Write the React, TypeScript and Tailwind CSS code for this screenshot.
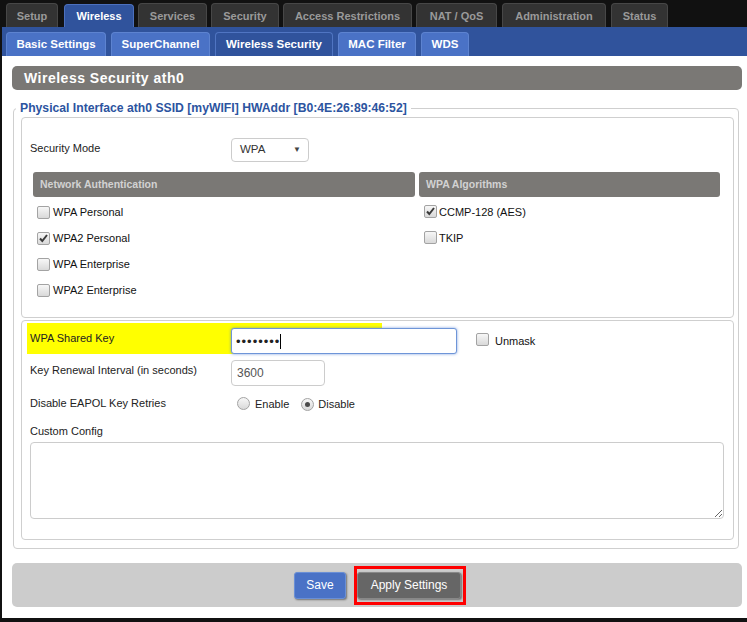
import React from "react";

function CheckBox({ checked = false }: { checked?: boolean }) {
  return (
    <span className="relative inline-block w-[13px] h-[13px] shrink-0 rounded-[2px] border border-[#a3a3a3] bg-gradient-to-b from-[#f7f7f7] to-[#d9d9d9]">
      {checked && (
        <svg viewBox="0 0 13 13" className="absolute left-[-1px] top-[-1px] w-[13px] h-[13px]">
          <path d="M3 6.5 L5.3 9 L10 3" fill="none" stroke="#3a3a3a" strokeWidth="2" />
        </svg>
      )}
    </span>
  );
}

function Radio({ checked = false }: { checked?: boolean }) {
  return (
    <span className="relative inline-flex items-center justify-center w-[13px] h-[13px] shrink-0 rounded-full border border-[#a3a3a3] bg-gradient-to-b from-[#f7f7f7] to-[#d9d9d9]">
      {checked && <span className="w-[5px] h-[5px] rounded-full bg-[#4a4a4a]" />}
    </span>
  );
}

const topTabs = [
  { label: "Setup", cls: "ml-[6px] w-[52px]" },
  { label: "Wireless", cls: "ml-[6px] w-[70px]", active: true },
  { label: "Services", cls: "ml-[4px] w-[69px]" },
  { label: "Security", cls: "ml-[4px] w-[68px]" },
  { label: "Access Restrictions", cls: "ml-[4px] w-[129px]" },
  { label: "NAT / QoS", cls: "ml-[4px] w-[81px]" },
  { label: "Administration", cls: "ml-[5px] w-[104px]" },
  { label: "Status", cls: "ml-[5px] w-[57px]" },
];

const subTabs = [
  { label: "Basic Settings", cls: "ml-[4px] w-[100px]" },
  { label: "SuperChannel", cls: "ml-[5px] w-[99px]" },
  { label: "Wireless Security", cls: "ml-[5px] w-[118px]", active: true },
  { label: "MAC Filter", cls: "ml-[5px] w-[78px]" },
  { label: "WDS", cls: "ml-[5px] w-[48px]" },
];

export default function App() {
  return (
    <div className="w-[747px] h-[622px] bg-[#111] overflow-hidden font-['Liberation_Sans',Arial,sans-serif] text-[11px] text-[#222]">
      {/* top tabs */}
      <div className="h-[27px] flex items-end">
        {topTabs.map((t) =>
          t.active ? (
            <div
              key={t.label}
              className={`${t.cls} h-[23px] pt-[1px] rounded-t-[4px] border border-b-0 border-[#4c70bd] bg-[#30539c] text-white font-bold text-[11px] flex items-center justify-center`}
            >
              {t.label}
            </div>
          ) : (
            <div
              key={t.label}
              className={`${t.cls} h-[24px] pt-[1px] rounded-t-[4px] border border-b-0 border-[#474747] bg-[#333333] text-[#9a9a9a] font-bold text-[11px] flex items-center justify-center`}
            >
              {t.label}
            </div>
          )
        )}
      </div>
      {/* sub tabs */}
      <div className="h-[29px] ml-[2px] bg-[#30539c] flex items-end">
        {subTabs.map((t) =>
          t.active ? (
            <div
              key={t.label}
              className={`${t.cls} h-[24px] rounded-t-[4px] border border-b-0 border-[#5075c2] bg-[#30539c] text-white font-bold text-[11.5px] flex items-center justify-center`}
            >
              {t.label}
            </div>
          ) : (
            <div
              key={t.label}
              className={`${t.cls} h-[24px] rounded-t-[4px] border border-b-0 border-[#5d83d0] bg-[#4a72c6] text-white font-bold text-[11.5px] flex items-center justify-center`}
            >
              {t.label}
            </div>
          )
        )}
      </div>

      {/* content */}
      <div className="ml-[2px] h-[562px] bg-white pt-[10px] pl-[10px] pr-[5px]">
        <div className="h-[24px] rounded-[5px] bg-[#7a7875] text-white font-bold text-[14px] tracking-[0.5px] pl-[12px] flex items-center">
          Wireless Security ath0
        </div>

        <fieldset className="mt-[12px] ml-[1px] mr-[3px] border border-[#cfcfcf] rounded-[4px] pl-[7px] pr-[4px] pb-[8px]">
          <legend className="ml-[-5px] px-[4px] text-[12.2px] leading-[13px] font-bold text-[#2c54a0]">
            Physical Interface ath0 SSID [myWIFI] HWAddr [B0:4E:26:89:46:52]
          </legend>

          {/* box 1 */}
          <div className="mt-[2px] h-[201px] border border-[#cfcfcf] rounded-[4px] pl-[8px] pt-[20px]">
            <div className="flex items-start h-[24px]">
              <div className="w-[201px] leading-[20px]">Security Mode</div>
              <div className="w-[78px] h-[24px] border border-[#cccccc] rounded-[4px] flex items-center justify-between pl-[8px] pr-[7px] text-[11.5px] text-[#333]">
                <span>WPA</span>
                <span className="text-[8px] text-[#444]">▼</span>
              </div>
            </div>

            <div className="mt-[10px] ml-[3px] flex gap-[4px]">
              <div className="w-[382px]">
                <div className="h-[25px] rounded-[3px] bg-[#7a7875] text-[#d2d2d2] font-bold text-[10.5px] pl-[7px] flex items-center">
                  Network Authentication
                </div>
                <div className="pt-[2px] pl-[4px]">
                  {[
                    ["WPA Personal", false],
                    ["WPA2 Personal", true],
                    ["WPA Enterprise", false],
                    ["WPA2 Enterprise", false],
                  ].map(([l, c]) => (
                    <div key={l as string} className="h-[26px] flex items-center gap-[3px]">
                      <CheckBox checked={c as boolean} />
                      <span className="text-[#111] pt-[1px]">{l as string}</span>
                    </div>
                  ))}
                </div>
              </div>
              <div className="w-[301px]">
                <div className="h-[25px] rounded-[3px] bg-[#7a7875] text-[#d2d2d2] font-bold text-[10.5px] pl-[7px] flex items-center">
                  WPA Algorithms
                </div>
                <div className="pt-[1px] pl-[5px]">
                  {[
                    ["CCMP-128 (AES)", true],
                    ["TKIP", false],
                  ].map(([l, c]) => (
                    <div key={l as string} className="h-[26px] flex items-center gap-[2px]">
                      <CheckBox checked={c as boolean} />
                      <span className="text-[#111] pt-[2px]">{l as string}</span>
                    </div>
                  ))}
                </div>
              </div>
            </div>
          </div>

          {/* box 2 */}
          <div className="mt-[2px] h-[220px] border border-[#cfcfcf] rounded-[4px] pl-[8px] pr-[9px]">
            <div className="relative mt-[2px] h-[31px] flex items-center">
              <div className="absolute left-[-3px] top-0 w-[355px] h-[31px] bg-[#ffff00]" />
              <div className="relative w-[201px]">WPA Shared Key</div>
              <div className="relative self-end w-[226px] h-[26px] rounded-[3px] border border-[#6e95d8] bg-white shadow-[0_0_3px_rgba(70,120,210,0.7)] flex items-center pl-[4px]">
                <span className="text-[13px] tracking-[1px] text-[#222] leading-none">••••••••</span>
                <span className="w-[1px] h-[15px] bg-black" />
              </div>
              <div className="relative ml-[19px] mt-[2px] flex items-center gap-[6px]">
                <CheckBox />
                <span className="pt-[4px] text-[#111]">Unmask</span>
              </div>
            </div>

            <div className="mt-[6px] flex items-start h-[26px]">
              <div className="w-[201px] leading-[20px]">Key Renewal Interval (in seconds)</div>
              <div className="w-[94px] h-[26px] rounded-[4px] border border-[#cccccc] flex items-center pl-[5px] text-[12px] text-[#555]">
                3600
              </div>
            </div>

            <div className="mt-[4px] h-[26px] flex items-center">
              <div className="w-[201px]">Disable EAPOL Key Retries</div>
              <div className="ml-[6px] flex items-center">
                <Radio />
                <span className="ml-[5px] pt-[2px]">Enable</span>
                <span className="ml-[12px]">
                  <Radio checked />
                </span>
                <span className="ml-[4px] pt-[2px]">Disable</span>
              </div>
            </div>

            <div className="mt-[8px] leading-[14px]">Custom Config</div>
            <textarea
              className="mt-[4px] block w-[694px] h-[77px] border border-[#cccccc] rounded-[4px] resize-y outline-none"
              defaultValue=""
            />
          </div>
        </fieldset>

        {/* bottom bar */}
        <div className="mt-[14px] h-[44px] rounded-[5px] bg-[#cccccc] flex items-center justify-center pl-[6px]">
          <div className="w-[52px] h-[27px] rounded-[3px] border border-[#6a8fd6] bg-[#4a72c6] text-white text-[12px] flex items-center justify-center shadow-[1px_1px_2px_rgba(0,0,0,0.45)]">
            Save
          </div>
          <div className="ml-[8px] border-[3px] border-[#ff0000] pt-[3px] pb-[3px] pr-[2px]">
            <div className="w-[104px] h-[27px] rounded-[3px] border border-[#888] bg-[#666666] text-white text-[12px] flex items-center justify-center shadow-[1px_1px_2px_rgba(0,0,0,0.45)]">
              Apply Settings
            </div>
          </div>
        </div>
      </div>
    </div>
  );
}
